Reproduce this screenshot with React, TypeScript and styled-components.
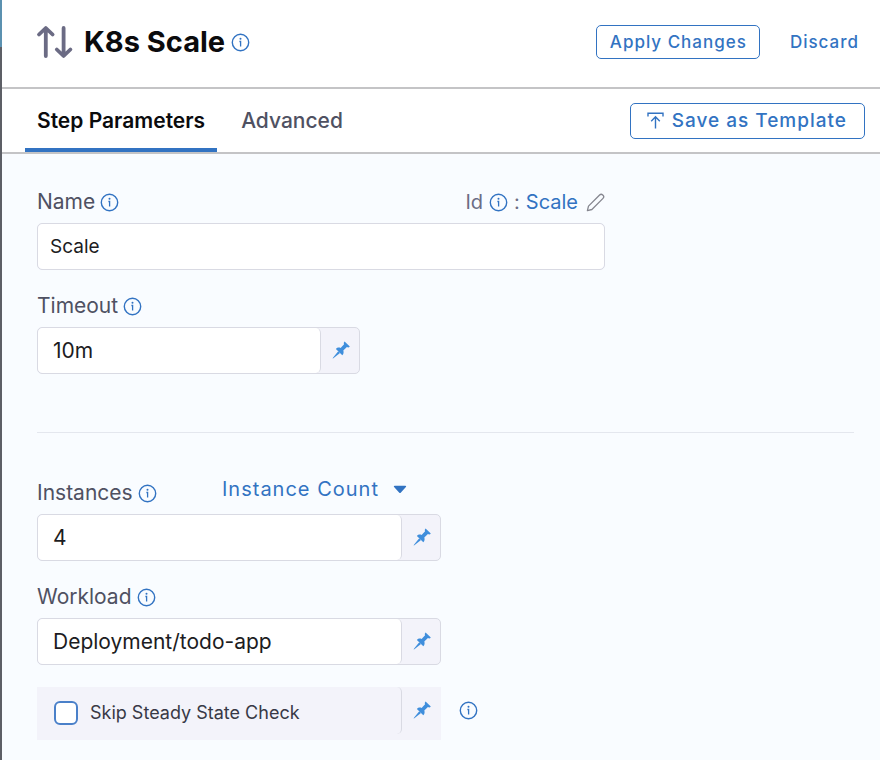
import React, { useState } from 'react';
import styled, { createGlobalStyle, css } from 'styled-components';

const blue = '#3273c2';
const line = '#d9dae3';
const haze = '#f3f3fa';

const GlobalStyle = createGlobalStyle`
  *, *::before, *::after { box-sizing: border-box; }
  html, body { margin: 0; }
  body {
    background: #f9fcff;
    color: #4f5162;
    font-family: Inter, "Liberation Sans", sans-serif;
    font-size: 20px;
    line-height: 24px;
  }
  button, input, select { font: inherit; color: inherit; margin: 0; }
`;

const Page = styled.div`
  display: flex;
  min-height: 100vh;
`;

const Edge = styled.div`
  flex: none;
  width: 2px;
  background: linear-gradient(#5b91b0 0, #5b91b0 47px, #5d5f66 47px);
`;

const Panel = styled.main`
  flex: 1;
  min-width: 0;
`;

const Header = styled.header`
  display: flex;
  align-items: center;
  justify-content: space-between;
  padding: 20px 13px 23px 34px;
  background: #fff;
  border-bottom: 2px solid #c4c4c6;
`;

const TitleGroup = styled.div`
  display: flex;
  align-items: center;
  gap: 6px;
`;

const Title = styled.h1`
  margin: 0 0 0 4px;
  color: #0b0b0d;
  font-size: 29px;
  line-height: 44px;
  font-weight: 650;
`;

const Actions = styled.div`
  display: flex;
  align-items: center;
  gap: 22px;
`;

const Button = styled.button<{ $outlined?: boolean }>`
  display: inline-flex;
  align-items: center;
  gap: 8px;
  padding: 4px 8px;
  background: none;
  border: 0;
  color: ${blue};
  font-size: 17px;
  font-weight: 500;
  letter-spacing: 1px;
  white-space: nowrap;
  cursor: pointer;
  ${({ $outlined }) =>
    $outlined &&
    css`
      padding: 4px 12px 4px 13px;
      background: #fff;
      border: 1px solid ${blue};
      border-radius: 5px;
    `}
`;

const SaveButton = styled(Button)`
  padding: 5px 17px 5px 16px;
  font-size: 19px;
`;

const TabBar = styled.div`
  display: flex;
  align-items: center;
  justify-content: space-between;
  padding: 0 15px 0 23px;
  background: #fff;
  border-bottom: 2px solid #c4c4c6;
`;

const Tabs = styled.div`
  display: flex;
  gap: 12px;
`;

const Tab = styled.button<{ $active?: boolean }>`
  padding: 20px 12px 15px;
  background: none;
  border: 0;
  border-bottom: 4px solid ${({ $active }) => ($active ? blue : 'transparent')};
  border-radius: 2px 2px 0 0;
  color: ${({ $active }) => ($active ? '#0b0b0d' : '#4f5162')};
  font-size: 21px;
  font-weight: ${({ $active }) => ($active ? 600 : 500)};
  cursor: pointer;
`;

const Form = styled.form`
  padding: 36px 26px 20px 35px;
`;

const Section = styled.section`
  display: flex;
  flex-direction: column;
  gap: 24px;
`;

const Divider = styled.hr`
  height: 1px;
  margin: 58px 0 48px;
  border: 0;
  background: #e4e7ee;
`;

const Field = styled.div<{ $width: number }>`
  display: flex;
  flex-direction: column;
  gap: 9px;
  width: 100%;
  max-width: ${({ $width }) => $width}px;
`;

const LabelRow = styled.div`
  display: flex;
  align-items: center;
  justify-content: space-between;
  height: 24px;
`;

const LabelGroup = styled.div`
  display: flex;
  align-items: center;
  gap: 5px;
`;

const Label = styled.label`
  font-size: 21px;
`;

const IdGroup = styled(LabelGroup)`
  gap: 6px;
  color: #6b6d85;
`;

const IdValue = styled.span`
  color: ${blue};
`;

const IconButton = styled.button`
  display: flex;
  align-items: center;
  justify-content: center;
  padding: 0;
  background: none;
  border: 0;
  color: ${blue};
  cursor: pointer;
`;

const PencilButton = styled(IconButton)`
  margin-left: 2px;
  color: #85868f;
`;

const InputBox = styled.div`
  display: flex;
  height: 47px;
  background: ${haze};
  border: 1px solid ${line};
  border-radius: 5px;
`;

const TextInput = styled.input<{ $pinned?: boolean }>`
  flex: 1;
  min-width: 0;
  padding: 0 ${({ $pinned }) => ($pinned ? 15 : 12)}px;
  background: #fff;
  border: 0;
  border-right: ${({ $pinned }) => ($pinned ? `1px solid ${line}` : '0')};
  border-radius: 5px;
  outline: none;
  color: #1c1c22;
  font-size: ${({ $pinned }) => ($pinned ? 21 : 19)}px;
`;

const PinButton = styled(IconButton)`
  flex: none;
  width: 38px;
  padding: 0 0 1px 2px;
  color: #3f8edc;
`;

const SelectWrap = styled.div`
  display: flex;
  align-items: center;
  gap: 14px;
  padding: 0 34px 8px 0;
  color: ${blue};
`;

const Select = styled.select`
  appearance: none;
  padding: 0;
  background: none;
  border: 0;
  outline: none;
  letter-spacing: 1px;
  cursor: pointer;
`;

const CheckLine = styled.div`
  display: flex;
  gap: 18px;
  margin-top: 22px;
`;

const CheckBlock = styled.div`
  display: flex;
  flex: 1;
  max-width: 404px;
  padding: 0 1px 6px 0;
  background: ${haze};
`;

const CheckLabel = styled.label`
  display: flex;
  flex: 1;
  align-items: center;
  gap: 12px;
  height: 47px;
  padding: 5px 0 0 17px;
  border-right: 1px solid ${line};
  border-radius: 5px;
  color: #383946;
  font-size: 18px;
`;

const Checkbox = styled.input`
  appearance: none;
  flex: none;
  width: 24px;
  height: 24px;
  background: #fff;
  border: 2px solid #4a80c9;
  border-radius: 6px;
  &:checked { background: ${blue}; }
`;

const CheckInfo = styled(IconButton)`
  height: 47px;
`;

const InfoIcon = () => (
  <svg width="19" height="19" viewBox="0 0 19 19" fill="none" stroke="currentColor" aria-hidden="true">
    <circle cx="9.5" cy="9.5" r="8.2" strokeWidth="1.4" />
    <circle cx="9.5" cy="5.8" r="1" fill="currentColor" stroke="none" />
    <path d="M8.4 8.5H9.6V13.4" strokeWidth="1.3" />
  </svg>
);

const ScaleIcon = () => (
  <svg width="38" height="34" viewBox="0 0 38 34" fill="none" stroke="#6b6b84" strokeWidth="3.8" strokeLinecap="round" strokeLinejoin="round" aria-hidden="true">
    <path d="M9.8 31V3.2M3 9.5L9.8 3L16.6 9.5" />
    <path d="M27.6 3V30.8M20.8 24.5L27.6 31L34.4 24.5" />
  </svg>
);

const UploadIcon = () => (
  <svg width="17" height="17" viewBox="0 0 17 17" fill="none" stroke="currentColor" strokeWidth="1.4" aria-hidden="true">
    <path d="M1 4.4V1.2H16V4.4" />
    <path d="M8.5 16.4V4.8M4.2 9.2L8.5 4.8L12.8 9.2" />
  </svg>
);

const PencilIcon = () => (
  <svg width="19" height="19" viewBox="0 0 19 19" fill="none" stroke="currentColor" strokeWidth="1.3" strokeLinejoin="round" aria-hidden="true">
    <path d="M1.4 17.6L2.5 13.1L13.6 2C14.5 1.1 15.8 1.1 16.7 2L17 2.3C17.9 3.2 17.9 4.5 17 5.4L5.9 16.5Z" />
  </svg>
);

const PinIcon = () => (
  <svg width="20" height="20" viewBox="0 0 20 20" fill="currentColor" aria-hidden="true">
    <path d="M13.6 1.4L18.8 6.6C18 7.6 16.9 7.6 15.9 7.1L12.3 10.6C12.9 12.4 12.7 14 11.3 15.3L4.9 8.9C6.2 7.5 7.9 7.3 9.6 7.9L13.1 4.3C12.6 3.3 12.7 2.2 13.6 1.4Z" />
    <path d="M7.2 11.2L9 13L2 18.6L1.6 18.2Z" />
  </svg>
);

const CaretIcon = () => (
  <svg width="14" height="9" viewBox="0 0 14 9" fill="currentColor" aria-hidden="true">
    <path d="M1.6.8H12.4C13.1.8 13.4 1.6 12.9 2.1L7.7 7.8C7.3 8.2 6.7 8.2 6.3 7.8L1.1 2.1C.6 1.6.9.8 1.6.8Z" />
  </svg>
);

const Info = ({ about }: { about: string }) => (
  <IconButton type="button" aria-label={about}>
    <InfoIcon />
  </IconButton>
);

const Pin = () => (
  <PinButton type="button" aria-label="Value type">
    <PinIcon />
  </PinButton>
);

type PinnedFieldProps = {
  id: string;
  label: string;
  value: string;
  width: number;
  children?: React.ReactNode;
};

const PinnedField = ({ id, label, value, width, children }: PinnedFieldProps) => (
  <Field $width={width}>
    <LabelRow>
      <LabelGroup>
        <Label htmlFor={id}>{label}</Label>
        <Info about={`About ${label}`} />
      </LabelGroup>
      {children}
    </LabelRow>
    <InputBox>
      <TextInput id={id} $pinned defaultValue={value} />
      <Pin />
    </InputBox>
  </Field>
);

export default function App() {
  const [tab, setTab] = useState('Step Parameters');

  return (
    <>
      <GlobalStyle />
      <Page>
        <Edge />
        <Panel>
          <Header>
            <TitleGroup>
              <ScaleIcon />
              <Title>K8s Scale</Title>
              <Info about="About K8s Scale" />
            </TitleGroup>
            <Actions>
              <Button type="button" $outlined>Apply Changes</Button>
              <Button type="button">Discard</Button>
            </Actions>
          </Header>
          <TabBar>
            <Tabs role="tablist">
              {['Step Parameters', 'Advanced'].map((name) => (
                <Tab key={name} type="button" role="tab" aria-selected={tab === name} $active={tab === name} onClick={() => setTab(name)}>
                  {name}
                </Tab>
              ))}
            </Tabs>
            <SaveButton type="button" $outlined>
              <UploadIcon />
              Save as Template
            </SaveButton>
          </TabBar>
          <Form>
            <Section>
              <Field $width={568}>
                <LabelRow>
                  <LabelGroup>
                    <Label htmlFor="name">Name</Label>
                    <Info about="About Name" />
                  </LabelGroup>
                  <IdGroup>
                    Id
                    <Info about="About Id" />
                    <span>:</span>
                    <IdValue>Scale</IdValue>
                    <PencilButton type="button" aria-label="Edit Id">
                      <PencilIcon />
                    </PencilButton>
                  </IdGroup>
                </LabelRow>
                <InputBox>
                  <TextInput id="name" defaultValue="Scale" />
                </InputBox>
              </Field>
              <PinnedField id="timeout" label="Timeout" value="10m" width={323} />
            </Section>
            <Divider />
            <Section>
              <PinnedField id="instances" label="Instances" value="4" width={404}>
                <SelectWrap>
                  <Select aria-label="Instance unit" defaultValue="Instance Count">
                    <option>Instance Count</option>
                  </Select>
                  <CaretIcon />
                </SelectWrap>
              </PinnedField>
              <PinnedField id="workload" label="Workload" value="Deployment/todo-app" width={404} />
            </Section>
            <CheckLine>
              <CheckBlock>
                <CheckLabel>
                  <Checkbox type="checkbox" />
                  Skip Steady State Check
                </CheckLabel>
                <Pin />
              </CheckBlock>
              <CheckInfo type="button" aria-label="About Skip Steady State Check">
                <InfoIcon />
              </CheckInfo>
            </CheckLine>
          </Form>
        </Panel>
      </Page>
    </>
  );
}
